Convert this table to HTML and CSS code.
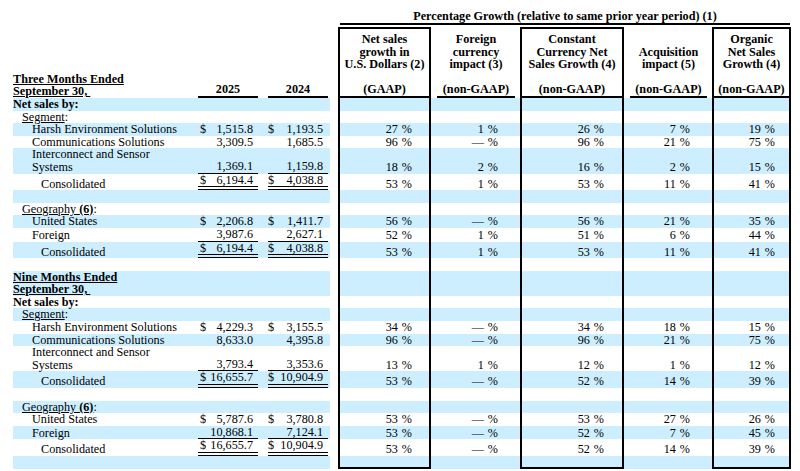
FILE: index.html
```html
<!DOCTYPE html>
<html>
<head>
<meta charset="utf-8">
<link rel="stylesheet" href="styles.css">
</head>
<body>
<div class="page">
<table class="fin">
<colgroup>
<col class="c-label"><col class="c-y25"><col class="c-y24"><col class="c-gap"><col class="c-d"><col class="c-e"><col class="c-f"><col class="c-g"><col class="c-h">
</colgroup>
<thead>
<tr class="top">
<th colspan="4"></th>
<th colspan="5"><div class="pg-title">Percentage Growth (relative to same prior year period) (1)</div></th>
</tr>
<tr class="hdr">
<th class="lab"><span class="ul">Three Months Ended</span><br><span class="ul">September 30,&nbsp;</span></th>
<th class="y25"><div class="u">2025</div></th>
<th class="y24"><div class="u">2024</div></th>
<th class="gap"></th>
<th class="box">Net sales<br>growth in<br>U.S. Dollars (2)<br><br>(GAAP)</th>
<th class="nb"><div class="u">Foreign<br>currency<br>impact (3)<br><br>(non-GAAP)</div></th>
<th class="box">Constant<br>Currency Net<br>Sales Growth (4)<br><br>(non-GAAP)</th>
<th class="nb"><div class="u">Acquisition<br>impact (5)<br><br>(non-GAAP)</div></th>
<th class="box">Organic<br>Net Sales<br>Growth (4)<br><br>(non-GAAP)</th>
</tr>
</thead>
<tbody>
<tr><td class="lab b">Net sales by:</td><td class="y25"></td><td class="y24"></td><td class="gap"></td><td class="box pd"></td><td class="pe"></td><td class="box pf"></td><td class="pgc"></td><td class="box ph"></td></tr>
<tr><td class="lab l1"><span class="ul">Segment</span>:</td><td class="y25"></td><td class="y24"></td><td class="gap"></td><td class="box pd"></td><td class="pe"></td><td class="box pf"></td><td class="pgc"></td><td class="box ph"></td></tr>
<tr><td class="lab l2">Harsh Environment Solutions</td><td class="y25"><div class="n"><span>$</span><span class="v">1,515.8</span></div></td><td class="y24"><div class="n"><span>$</span><span class="v">1,193.5</span></div></td><td class="gap"></td><td class="box pd">27<span class="pc">%</span></td><td class="pe">1<span class="pc">%</span></td><td class="box pf">26<span class="pc">%</span></td><td class="pgc">7<span class="pc">%</span></td><td class="box ph">19<span class="pc">%</span></td></tr>
<tr><td class="lab l2">Communications Solutions</td><td class="y25"><div class="n"><span class="v">3,309.5</span></div></td><td class="y24"><div class="n"><span class="v">1,685.5</span></div></td><td class="gap"></td><td class="box pd">96<span class="pc">%</span></td><td class="pe">—<span class="pc">%</span></td><td class="box pf">96<span class="pc">%</span></td><td class="pgc">21<span class="pc">%</span></td><td class="box ph">75<span class="pc">%</span></td></tr>
<tr><td class="lab l2">Interconnect and Sensor<br>Systems</td><td class="y25"><div class="n sl"><span class="v">1,369.1</span></div></td><td class="y24"><div class="n sl"><span class="v">1,159.8</span></div></td><td class="gap"></td><td class="box pd">18<span class="pc">%</span></td><td class="pe">2<span class="pc">%</span></td><td class="box pf">16<span class="pc">%</span></td><td class="pgc">2<span class="pc">%</span></td><td class="box ph">15<span class="pc">%</span></td></tr>
<tr><td class="lab l3">Consolidated</td><td class="y25"><div class="n dbl"><span>$</span><span class="v">6,194.4</span></div></td><td class="y24"><div class="n dbl"><span>$</span><span class="v">4,038.8</span></div></td><td class="gap"></td><td class="box pd">53<span class="pc">%</span></td><td class="pe">1<span class="pc">%</span></td><td class="box pf">53<span class="pc">%</span></td><td class="pgc">11<span class="pc">%</span></td><td class="box ph">41<span class="pc">%</span></td></tr>
<tr><td class="lab">&nbsp;</td><td class="y25"></td><td class="y24"></td><td class="gap"></td><td class="box pd"></td><td class="pe"></td><td class="box pf"></td><td class="pgc"></td><td class="box ph"></td></tr>
<tr><td class="lab l1"><span class="ul">Geography <b>(6)</b></span>:</td><td class="y25"></td><td class="y24"></td><td class="gap"></td><td class="box pd"></td><td class="pe"></td><td class="box pf"></td><td class="pgc"></td><td class="box ph"></td></tr>
<tr><td class="lab l2">United States</td><td class="y25"><div class="n"><span>$</span><span class="v">2,206.8</span></div></td><td class="y24"><div class="n"><span>$</span><span class="v">1,411.7</span></div></td><td class="gap"></td><td class="box pd">56<span class="pc">%</span></td><td class="pe">—<span class="pc">%</span></td><td class="box pf">56<span class="pc">%</span></td><td class="pgc">21<span class="pc">%</span></td><td class="box ph">35<span class="pc">%</span></td></tr>
<tr><td class="lab l2">Foreign</td><td class="y25"><div class="n sl"><span class="v">3,987.6</span></div></td><td class="y24"><div class="n sl"><span class="v">2,627.1</span></div></td><td class="gap"></td><td class="box pd">52<span class="pc">%</span></td><td class="pe">1<span class="pc">%</span></td><td class="box pf">51<span class="pc">%</span></td><td class="pgc">6<span class="pc">%</span></td><td class="box ph">44<span class="pc">%</span></td></tr>
<tr><td class="lab l3">Consolidated</td><td class="y25"><div class="n dbl"><span>$</span><span class="v">6,194.4</span></div></td><td class="y24"><div class="n dbl"><span>$</span><span class="v">4,038.8</span></div></td><td class="gap"></td><td class="box pd">53<span class="pc">%</span></td><td class="pe">1<span class="pc">%</span></td><td class="box pf">53<span class="pc">%</span></td><td class="pgc">11<span class="pc">%</span></td><td class="box ph">41<span class="pc">%</span></td></tr>
<tr><td class="lab">&nbsp;</td><td class="y25"></td><td class="y24"></td><td class="gap"></td><td class="box pd"></td><td class="pe"></td><td class="box pf"></td><td class="pgc"></td><td class="box ph"></td></tr>
<tr><td class="lab b"><span class="ul">Nine Months Ended</span><br><span class="ul">September 30,&nbsp;</span></td><td class="y25"></td><td class="y24"></td><td class="gap"></td><td class="box pd"></td><td class="pe"></td><td class="box pf"></td><td class="pgc"></td><td class="box ph"></td></tr>
<tr><td class="lab b">Net sales by:</td><td class="y25"></td><td class="y24"></td><td class="gap"></td><td class="box pd"></td><td class="pe"></td><td class="box pf"></td><td class="pgc"></td><td class="box ph"></td></tr>
<tr><td class="lab l1"><span class="ul">Segment</span>:</td><td class="y25"></td><td class="y24"></td><td class="gap"></td><td class="box pd"></td><td class="pe"></td><td class="box pf"></td><td class="pgc"></td><td class="box ph"></td></tr>
<tr><td class="lab l2">Harsh Environment Solutions</td><td class="y25"><div class="n"><span>$</span><span class="v">4,229.3</span></div></td><td class="y24"><div class="n"><span>$</span><span class="v">3,155.5</span></div></td><td class="gap"></td><td class="box pd">34<span class="pc">%</span></td><td class="pe">—<span class="pc">%</span></td><td class="box pf">34<span class="pc">%</span></td><td class="pgc">18<span class="pc">%</span></td><td class="box ph">15<span class="pc">%</span></td></tr>
<tr><td class="lab l2">Communications Solutions</td><td class="y25"><div class="n"><span class="v">8,633.0</span></div></td><td class="y24"><div class="n"><span class="v">4,395.8</span></div></td><td class="gap"></td><td class="box pd">96<span class="pc">%</span></td><td class="pe">—<span class="pc">%</span></td><td class="box pf">96<span class="pc">%</span></td><td class="pgc">21<span class="pc">%</span></td><td class="box ph">75<span class="pc">%</span></td></tr>
<tr><td class="lab l2">Interconnect and Sensor<br>Systems</td><td class="y25"><div class="n sl"><span class="v">3,793.4</span></div></td><td class="y24"><div class="n sl"><span class="v">3,353.6</span></div></td><td class="gap"></td><td class="box pd">13<span class="pc">%</span></td><td class="pe">1<span class="pc">%</span></td><td class="box pf">12<span class="pc">%</span></td><td class="pgc">1<span class="pc">%</span></td><td class="box ph">12<span class="pc">%</span></td></tr>
<tr><td class="lab l3">Consolidated</td><td class="y25"><div class="n dbl"><span>$</span><span class="v">16,655.7</span></div></td><td class="y24"><div class="n dbl"><span>$</span><span class="v">10,904.9</span></div></td><td class="gap"></td><td class="box pd">53<span class="pc">%</span></td><td class="pe">—<span class="pc">%</span></td><td class="box pf">52<span class="pc">%</span></td><td class="pgc">14<span class="pc">%</span></td><td class="box ph">39<span class="pc">%</span></td></tr>
<tr><td class="lab">&nbsp;</td><td class="y25"></td><td class="y24"></td><td class="gap"></td><td class="box pd"></td><td class="pe"></td><td class="box pf"></td><td class="pgc"></td><td class="box ph"></td></tr>
<tr><td class="lab l1"><span class="ul">Geography <b>(6)</b></span>:</td><td class="y25"></td><td class="y24"></td><td class="gap"></td><td class="box pd"></td><td class="pe"></td><td class="box pf"></td><td class="pgc"></td><td class="box ph"></td></tr>
<tr><td class="lab l2">United States</td><td class="y25"><div class="n"><span>$</span><span class="v">5,787.6</span></div></td><td class="y24"><div class="n"><span>$</span><span class="v">3,780.8</span></div></td><td class="gap"></td><td class="box pd">53<span class="pc">%</span></td><td class="pe">—<span class="pc">%</span></td><td class="box pf">53<span class="pc">%</span></td><td class="pgc">27<span class="pc">%</span></td><td class="box ph">26<span class="pc">%</span></td></tr>
<tr><td class="lab l2">Foreign</td><td class="y25"><div class="n sl"><span class="v">10,868.1</span></div></td><td class="y24"><div class="n sl"><span class="v">7,124.1</span></div></td><td class="gap"></td><td class="box pd">53<span class="pc">%</span></td><td class="pe">—<span class="pc">%</span></td><td class="box pf">52<span class="pc">%</span></td><td class="pgc">7<span class="pc">%</span></td><td class="box ph">45<span class="pc">%</span></td></tr>
<tr><td class="lab l3">Consolidated</td><td class="y25"><div class="n dbl"><span>$</span><span class="v">16,655.7</span></div></td><td class="y24"><div class="n dbl"><span>$</span><span class="v">10,904.9</span></div></td><td class="gap"></td><td class="box pd">53<span class="pc">%</span></td><td class="pe">—<span class="pc">%</span></td><td class="box pf">52<span class="pc">%</span></td><td class="pgc">14<span class="pc">%</span></td><td class="box ph">39<span class="pc">%</span></td></tr>
<tr class="last"><td class="lab">&nbsp;</td><td class="y25"></td><td class="y24"></td><td class="gap"></td><td class="box pd"></td><td class="pe"></td><td class="box pf"></td><td class="pgc"></td><td class="box ph"></td></tr>
</tbody>
</table>
</div>
</body>
</html>
```

FILE: styles.css
```css
html, body {
  margin: 0;
  padding: 0;
  background: #fff;
}
body {
  font-family: "Liberation Serif", "Times New Roman", serif;
  font-size: 12.2px;
  color: #000;
}
.page {
  padding: 0 0 0 13px;
}
table.fin {
  border-collapse: separate;
  border-spacing: 0;
  table-layout: fixed;
  width: 778px;
}
col.c-label { width: 183px; }
col.c-y25 { width: 64px; }
col.c-y24 { width: 70px; }
col.c-gap { width: 8px; }
col.c-d { width: 93px; }
col.c-e { width: 89px; }
col.c-f { width: 104px; }
col.c-g { width: 88px; }
col.c-h { width: 79px; }

th, td {
  padding: 0;
  line-height: 12.6px;
  vertical-align: bottom;
  white-space: nowrap;
}
th {
  font-weight: bold;
  text-align: center;
}
.pg-title {
  padding-top: 10px;
  line-height: 13px;
  border-bottom: 2px solid #000;
  margin: 0 1px 2px 2px;
}
.ul {
  text-decoration: underline;
}
th.lab, td.lab {
  text-align: left;
}
td.b { font-weight: bold; }
td.l1 { padding-left: 9px; }
td.l2 { padding-left: 19px; }
td.l3 { padding-left: 28px; }

.y25 { padding: 0 2px; }
.y24 { padding: 0 2px 0 8px; }
th.y25 .u, th.y24 .u {
  border-bottom: 2px solid #000;
}
.n {
  display: flex;
  justify-content: space-between;
}
.n .v { margin-left: auto; }
.y25 .n { padding: 0 5px 0 2px; }
.y24 .n { padding: 0 5px 0 0; }
.n.sl { border-bottom: 1px solid #000; }
.n.dbl { border-bottom: 4px double #000; }

.box {
  border-left: 2px solid #000;
  border-right: 2px solid #000;
}
th.box {
  border-top: 2px solid #000;
  border-bottom: 2px solid #000;
  padding-top: 4px;
}
th.nb .u {
  margin: 0 5px 0 6px;
  border-bottom: 2px solid #000;
}
tbody tr:nth-child(odd) td {
  background: #cceeff;
}
tbody tr:nth-child(odd) td.gap {
  background: transparent;
}
tr.last td.box {
  border-bottom: 2px solid #000;
}
td.pd, td.pe, td.pf, td.pgc, td.ph { text-align: right; }
td.pd { padding-right: 17px; }
td.pe { padding-right: 22px; }
td.pf { padding-right: 18px; }
td.pgc { padding-right: 22px; }
td.ph { padding-right: 14px; }
.pc { margin-left: 4px; }
```
